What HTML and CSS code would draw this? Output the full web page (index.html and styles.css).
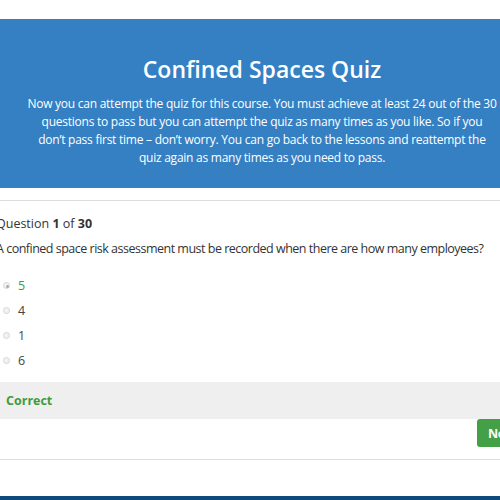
FILE: index.html
```
<!DOCTYPE html>
<html lang="en">

<head>
  <meta charset="UTF-8">
  <meta name="viewport" content="width=device-width, initial-scale=1.0">
  <title>Confined Spaces Quiz</title>
  <link rel="stylesheet" href="styles.css">
</head>

<body>
  <div class="page">
    <div class="banner">
      <h1>Confined Spaces Quiz</h1>
      <p>Now you can attempt the quiz for this course. You must achieve at least 24 out of the 30<br>
        questions to pass but you can attempt the quiz as many times as you like. So if you<br>
        don’t pass first time – don’t worry. You can go back to the lessons and reattempt the<br>
        quiz again as many times as you need to pass.</p>
    </div>

    <div class="quiz">
      <div class="count">Question <b>1</b> of <b>30</b></div>
      <div class="question">A confined space risk assessment must be recorded when there are how many employees?</div>

      <ul class="answers">
        <li class="right"><input type="radio" name="q1" checked disabled> 5</li>
        <li><input type="radio" name="q1" disabled> 4</li>
        <li><input type="radio" name="q1" disabled> 1</li>
        <li><input type="radio" name="q1" disabled> 6</li>
      </ul>

      <div class="feedback">Correct</div>
      <div class="actions">
        <button type="button" class="nextBtn">Next</button>
      </div>
    </div>

    <div class="footer"></div>
  </div>
</body>

</html>
```
FILE: styles.css
```
html,
body {
  margin: 0;
  overflow: hidden;
  background: #fff;
}

.page {
  width: 532px;
  margin-left: -4px;
  padding-top: 19px;
  font-family: "Open Sans", "Noto Sans", sans-serif;
  color: #333;
}

.banner {
  background-color: #3580c3;
  color: #fff;
  text-align: center;
  height: 169px;
  padding-top: 35px;
  box-sizing: border-box;
}

.banner h1 {
  margin: 0 0 11px;
  font-size: 23px;
  font-weight: 600;
  line-height: 30px;
}

.banner p {
  width: 490px;
  margin: 0 auto;
  font-size: 12px;
  letter-spacing: -0.25px;
  line-height: 18px;
}

.quiz {
  margin-top: 12px;
  border-top: 1px solid #ddd;
  border-bottom: 1px solid #ddd;
  padding-top: 14px;
}

.count {
  font-size: 12.5px;
  line-height: 18px;
}

.question {
  margin-top: 6px;
  font-size: 12.5px;
  letter-spacing: -0.5px;
  line-height: 20px;
  white-space: nowrap;
}

.answers {
  list-style: none;
  margin: 14px 0 0;
  padding: 0;
}

.answers li {
  display: flex;
  align-items: center;
  gap: 8px;
  height: 25px;
  font-size: 12.5px;
  color: #444;
}

.answers li.right {
  color: #3d9b40;
}

.answers input {
  appearance: none;
  width: 7px;
  height: 7px;
  margin: 0 0 0 7px;
  border: 1px solid #d6d6d6;
  border-radius: 50%;
  background: #f2f2f2;
  position: relative;
}

.answers input:checked::after {
  content: "";
  position: absolute;
  left: 2px;
  top: 2px;
  width: 3px;
  height: 3px;
  border-radius: 50%;
  background: #aaa;
}

.feedback {
  margin-top: 9px;
  background: #efefef;
  height: 37px;
  line-height: 37px;
  padding-left: 10px;
  font-size: 12.5px;
  font-weight: 700;
  color: #3d9b40;
}

.actions {
  display: flex;
  justify-content: flex-end;
  padding-bottom: 12px;
}

.nextBtn {
  height: 28px;
  width: 56px;
  margin: 0 -5px 0 0;
  border: 0;
  border-radius: 3px;
  background: #43a047;
  color: #fff;
  font-family: inherit;
  font-size: 12.5px;
  font-weight: 700;
  letter-spacing: -0.3px;
  text-align: left;
  padding-left: 11px;
}

.footer {
  margin-top: 36px;
  height: 10px;
  background: #0e4a7c;
}
```
